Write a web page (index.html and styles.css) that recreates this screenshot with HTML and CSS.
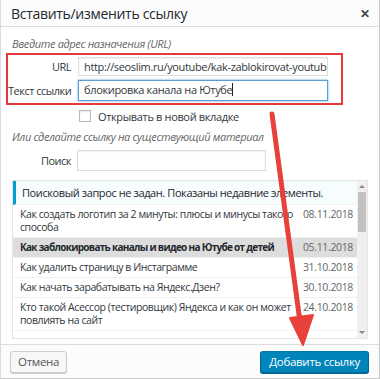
FILE: index.html
```html
<!DOCTYPE html>
<html lang="ru">
<head>
<meta charset="UTF-8">
<title>Вставить/изменить ссылку</title>
<link rel="stylesheet" href="styles.css">
</head>
<body>

<div class="dialog">
    <div class="dialog-head">
        <h1>Вставить/изменить ссылку</h1>
        <span class="close">&#10005;</span>
    </div>

    <div class="dialog-body">
        <p class="hint">Введите адрес назначения (URL)</p>
        <div class="link-box">
            <div class="field">
                <label>URL</label>
                <div class="input">http://seoslim.ru/youtube/kak-zablokirovat-youtub</div>
            </div>
            <div class="field">
                <label>Текст ссылки</label>
                <div class="input focus">блокировка канала на Ютубе<span class="caret"></span></div>
            </div>
        </div>
        <div class="check-row">
            <span class="checkbox"></span>
            <span>Открывать в новой вкладке</span>
        </div>

        <p class="hint second">Или сделайте ссылку на существующий материал</p>
        <div class="search-row">
            <label>Поиск</label>
            <div class="input search"></div>
        </div>

        <div class="results">
            <ul class="list">
                <li class="notice">Поисковый запрос не задан. Показаны недавние элементы.</li>
                <li><span class="title">Как создать логотип за 2 минуты: плюсы и минусы такого способа</span><span class="date">08.11.2018</span></li>
                <li class="selected"><span class="title">Как заблокировать каналы и видео на Ютубе от детей</span><span class="date">05.11.2018</span></li>
                <li><span class="title">Как удалить страницу в Инстаграмме</span><span class="date">31.10.2018</span></li>
                <li><span class="title">Как начать зарабатывать на Яндекс.Дзен?</span><span class="date">30.10.2018</span></li>
                <li><span class="title">Кто такой Асессор (тестировщик) Яндекса и как он может повлиять на сайт</span><span class="date">24.10.2018</span></li>
            </ul>
            <div class="scrollbar">
                <span class="arr up"></span>
                <span class="thumb"></span>
                <span class="arr down"></span>
            </div>
        </div>
    </div>

    <div class="dialog-foot">
        <button class="btn">Отмена</button>
        <button class="btn primary">Добавить ссылку</button>
    </div>

    <!-- красная стрелка поверх окна -->
    <svg class="arrow" width="380" height="379" viewBox="0 0 380 379">
        <line x1="272" y1="114" x2="300" y2="322" stroke="#e8413c" stroke-width="5" stroke-linecap="round"/>
        <polygon points="290,318 313,315 303,345" fill="#e8413c" stroke="#e8413c" stroke-width="2" stroke-linejoin="round"/>
    </svg>
</div>

</body>
</html>
```

FILE: styles.css
```css
body {
    margin: 0;
    font-family: 'Open Sans', 'Noto Sans', sans-serif;
    font-size: 11px;
    letter-spacing: -0.35px;
    color: #32373c;
    background: #fff;
}
.dialog {
    position: relative;
    width: 378px;
    height: 378px;
    border: 1px solid #c9c9c9;
    border-top: none;
    border-left-color: #dcdcdc;
    background: #fff;
    display: flex;
    flex-direction: column;
}
.dialog-head {
    height: 27px;
    display: flex;
    align-items: center;
    justify-content: space-between;
    padding: 0 9px 0 10px;
    background: #fcfcfc;
    border-bottom: 1px solid #ddd;
    box-sizing: border-box;
}
.dialog-head h1 {
    margin: 0;
    font-size: 14px;
    font-weight: 400;
    letter-spacing: -0.3px;
    color: #23282d;
}
.close {
    font-size: 12px;
    font-weight: 700;
    color: #444;
}
.dialog-body {
    flex: 1;
    padding: 8px 11px 0 11px;
}
.hint {
    margin: 0;
    font-style: italic;
    color: #666;
    height: 17px;
    line-height: 17px;
}
.hint.second {
    margin-top: 5px;
}
.link-box {
    margin: 1px 25px 0 -6px;
    border: 2px solid #e5393b;
    padding: 2px 13px 0 0;
    height: 46px;
}
.field {
    display: flex;
    align-items: center;
    margin-bottom: 4px;
}
.field label, .search-row label {
    width: 70px;
    text-align: right;
    padding-right: 7px;
    box-sizing: border-box;
    white-space: nowrap;
    letter-spacing: -0.5px;
    color: #32373c;
}
.input {
    flex: 1;
    height: 19px;
    border: 1px solid #ddd;
    box-shadow: inset 0 1px 2px rgba(0, 0, 0, 0.07);
    padding: 0 5px;
    line-height: 18px;
    font-size: 11px;
    color: #32373c;
    white-space: nowrap;
    overflow: hidden;
    box-sizing: border-box;
}
.input.focus {
    height: 21px;
    border-color: #5b9dd9;
    box-shadow: 0 0 2px rgba(30, 140, 190, 0.8);
}
.caret {
    display: inline-block;
    width: 1px;
    height: 13px;
    background: #222;
    vertical-align: -2px;
}
.check-row {
    display: flex;
    align-items: center;
    margin: 4px 0 0 67px;
    height: 14px;
}
.checkbox {
    width: 12px;
    height: 12px;
    border: 1px solid #b4b9be;
    box-shadow: inset 0 1px 2px rgba(0, 0, 0, 0.1);
    margin-right: 7px;
    box-sizing: border-box;
}
.search-row {
    display: flex;
    align-items: center;
    margin-top: 5px;
}
.search-row label {
    width: 65px;
    padding-right: 6px;
}
.input.search {
    flex: none;
    width: 189px;
    height: 21px;
}
.results {
    margin-top: 9px;
    height: 157px;
    border: 1px solid #e5e5e5;
    display: flex;
    overflow: hidden;
}
.list {
    flex: 1;
    list-style: none;
    margin: 0;
    padding: 0;
    font-size: 10.5px;
    letter-spacing: -0.42px;
}
.list li {
    display: flex;
    align-items: flex-start;
    padding: 3px 4px 3px 7px;
    line-height: 13px;
    border-bottom: 1px solid #f1f1f1;
}
.list li.notice {
    padding: 5px 5px 5px 6px;
    border-left: 3px solid #00a0d2;
    background: #f7fcfe;
    color: #23282d;
    font-size: 11px;
    letter-spacing: -0.4px;
}
.list li.selected {
    background: #ddd;
    font-weight: 700;
    font-size: 10px;
    letter-spacing: -0.7px;
    color: #23282d;
}
.list li.selected .date {
    font-size: 10.5px;
}
.title {
    flex: 1;
    padding-right: 4px;
}
.date {
    flex: none;
    color: #666;
    font-weight: 400;
    letter-spacing: -0.35px;
}
.scrollbar {
    width: 10px;
    background: #f0f0f0;
    display: flex;
    flex-direction: column;
    align-items: center;
}
.arr {
    width: 0;
    height: 0;
    border-left: 3px solid transparent;
    border-right: 3px solid transparent;
    margin: 4px 0;
}
.arr.up {
    border-bottom: 3px solid #888;
}
.arr.down {
    border-top: 3px solid #888;
    margin-top: auto;
}
.thumb {
    width: 8px;
    height: 40px;
    background: #c1c1c1;
}
.dialog-foot {
    height: 33px;
    border-top: 1px solid #ddd;
    background: #fcfcfc;
    display: flex;
    justify-content: space-between;
    align-items: center;
    padding: 0 10px 0 9px;
}
.btn {
    height: 22px;
    padding: 0 7px;
    font-family: inherit;
    font-size: 11.5px;
    letter-spacing: -0.3px;
    color: #555;
    background: #f7f7f7;
    border: 1px solid #ccc;
    border-radius: 3px;
    box-shadow: 0 1px 0 #ccc;
    cursor: pointer;
}
.btn.primary {
    padding: 0 8px;
    color: #fff;
    background: #0085ba;
    border-color: #0073aa #006799 #006799;
    box-shadow: 0 1px 0 #006799;
}
.arrow {
    position: absolute;
    left: -1px;
    top: 0;
    pointer-events: none;
}
```
